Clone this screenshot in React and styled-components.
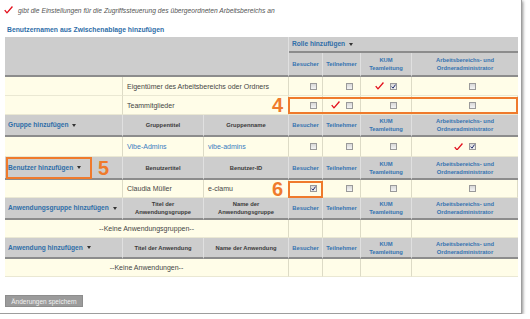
import React from "react";
import styled, { createGlobalStyle } from "styled-components";

const GlobalStyle = createGlobalStyle`
  html, body { margin: 0; padding: 0; background: #fff; }
  body { font-family: "Liberation Sans", Arial, sans-serif; }
`;

const COLS = "118px 81px 85px 34px 38px 51px 106px";
const ORANGE = "#ef7a2c";
const BLUE = "#2f6ea8";

const Frame = styled.div`
  box-sizing: border-box;
  width: 522px;
  height: 314px;
  padding: 0 0 0 5px;
  border-right: 1px solid #9d9d9d;
  border-bottom: 1px solid #9d9d9d;
  box-shadow: 1px 1px 3px rgba(0, 0, 0, 0.45);
  background: #fff;
`;

const Note = styled.div`
  display: flex;
  align-items: center;
  gap: 5px;
  height: 20px;
  margin-left: -1px;
  font-style: italic;
  font-size: 6.7px;
  color: #555;
`;

const Subtitle = styled.div`
  margin: 4px 0 1px 2px;
  height: 12px;
  line-height: 12px;
  font-weight: bold;
  font-size: 6.8px;
  color: ${BLUE};
`;

const Table = styled.div`
  width: 513px;
  display: flex;
  flex-direction: column;
`;

const HeadBlock = styled.div`
  display: grid;
  grid-template-columns: ${COLS};
  grid-template-rows: 16px 24px;
`;

const Row = styled.div`
  position: relative;
  display: grid;
  grid-template-columns: ${COLS};
  height: ${(p) => p.$h}px;
`;

const HeadCell = styled.div`
  box-sizing: border-box;
  grid-column: span ${(p) => p.$span || 1};
  grid-row: span ${(p) => p.$rows || 1};
  display: flex;
  align-items: center;
  justify-content: ${(p) => (p.$left ? "flex-start" : "center")};
  padding-left: ${(p) => (p.$left ? 3 : 0)}px;
  background: #cdcdcd;
  border-right: ${(p) => (p.$end ? "none" : "1px solid #e0e0e0")};
  border-bottom: 2px solid #8c8c8c;
  text-align: center;
  font-weight: bold;
  font-size: 5.8px;
  line-height: 8px;
  color: ${(p) => (p.$dark ? "#3a3a3a" : "#3573b0")};
  white-space: nowrap;
`;

const Label = styled.span`
  display: inline-flex;
  align-items: center;
  font-size: 6.6px;
  color: ${BLUE};
`;

const Caret = styled.span`
  display: inline-block;
  width: 0;
  height: 0;
  margin-left: 4px;
  border-left: 2.5px solid transparent;
  border-right: 2.5px solid transparent;
  border-top: 3px solid #333;
`;

const BodyCell = styled.div`
  box-sizing: border-box;
  grid-column: span ${(p) => p.$span || 1};
  display: flex;
  align-items: center;
  justify-content: ${(p) => (p.$center ? "center" : "flex-start")};
  gap: 6px;
  padding-left: ${(p) => (p.$center ? 0 : 4)}px;
  background: #fffde8;
  border-right: 1px solid #dddbc6;
  border-bottom: 1px solid #eae8d3;
  font-size: 7px;
  color: #454545;
  white-space: nowrap;
  &:last-child {
    border-right: none;
  }
`;

const Link = styled.span`
  color: #3a7cc0;
`;

const TickSlot = styled.span`
  display: flex;
  width: 9px;
  height: 8px;
  visibility: ${(p) => (p.$on ? "visible" : "hidden")};
`;

const Box = styled.span`
  box-sizing: border-box;
  display: flex;
  align-items: center;
  justify-content: center;
  width: 7px;
  height: 7px;
  border: 1px solid #9a9a9a;
  background: linear-gradient(#d8d8d8, #f4f4f4);
`;

const Callout = styled.div`
  position: absolute;
  box-sizing: border-box;
  border: 2px solid ${ORANGE};
  pointer-events: none;
`;

const Marker = styled.div`
  position: absolute;
  top: 0;
  bottom: 0;
  display: flex;
  align-items: center;
  font-weight: bold;
  font-size: 20px;
  color: ${ORANGE};
`;

const SaveButton = styled.button`
  display: block;
  margin-top: 18px;
  width: 78px;
  height: 12px;
  padding: 0;
  background: #9b9b9b;
  border: 1px solid #8d8d8d;
  color: #f2f2f2;
  font-family: inherit;
  font-size: 6.5px;
`;

function RedCheck({ size = 9 }) {
  return (
    <svg width={size} height={size * 0.85} viewBox="0 0 10 8.5">
      <path d="M0.8 4.6 L3.3 7.6 L9.4 0.6" fill="none" stroke="#e3101c" strokeWidth="1.5" strokeLinejoin="round" />
    </svg>
  );
}

function BlueCheck() {
  return (
    <svg width="5" height="5" viewBox="0 0 5 5">
      <path d="M0.6 2.6 L2 4.2 L4.5 0.6" fill="none" stroke="#23306e" strokeWidth="1" />
    </svg>
  );
}

function RoleHeads() {
  return (
    <>
      <HeadCell>Besucher</HeadCell>
      <HeadCell>Teilnehmer</HeadCell>
      <HeadCell>KUM<br />Teamleitung</HeadCell>
      <HeadCell $end>Arbeitsbereichs- und<br />Ordneradministrator</HeadCell>
    </>
  );
}

function RoleCells({ roles }) {
  return roles.map(([tick, checked], i) => (
    <BodyCell key={i} $center>
      <TickSlot $on={tick}>
        <RedCheck size={9} />
      </TickSlot>
      <Box>{checked ? <BlueCheck /> : null}</Box>
    </BodyCell>
  ));
}

function EmptyRoles() {
  return [0, 1, 2, 3].map((i) => <BodyCell key={i} />);
}

function Section({ title, col1, col2, dark = true, h = 22, children }) {
  return (
    <Row $h={h}>
      <HeadCell $left>
        <Label>{title}<Caret /></Label>
      </HeadCell>
      <HeadCell $dark={dark}>{col1}</HeadCell>
      <HeadCell $dark={dark}>{col2}</HeadCell>
      <RoleHeads />
      {children}
    </Row>
  );
}

export default function App() {
  return (
    <>
      <GlobalStyle />
      <Frame>
        <Note>
          <RedCheck size={9} />
          gibt die Einstellungen für die Zugriffssteuerung des übergeordneten Arbeitsbereichs an
        </Note>
        <Subtitle>Benutzernamen aus Zwischenablage hinzufügen</Subtitle>

        <Table>
          <HeadBlock>
            <HeadCell $span={3} $rows={2} />
            <HeadCell $span={4} $left $end>
              <Label>Rolle hinzufügen<Caret /></Label>
            </HeadCell>
            <RoleHeads />
          </HeadBlock>

          <Row $h={19}>
            <BodyCell />
            <BodyCell $span={2}>Eigentümer des Arbeitsbereichs oder Ordners</BodyCell>
            <RoleCells roles={[[0, 0], [0, 0], [1, 1], [0, 0]]} />
          </Row>
          <Row $h={19}>
            <BodyCell />
            <BodyCell $span={2}>Teammitglieder</BodyCell>
            <RoleCells roles={[[0, 0], [1, 0], [0, 0], [0, 0]]} />
            <Callout style={{ left: 283, top: 1, width: 230, height: 17 }} />
            <Marker style={{ left: 267 }}>4</Marker>
          </Row>

          <Section title="Gruppe hinzufügen" col1="Gruppentitel" col2="Gruppenname" />
          <Row $h={20}>
            <BodyCell />
            <BodyCell><Link>Vibe-Admins</Link></BodyCell>
            <BodyCell><Link>vibe-admins</Link></BodyCell>
            <RoleCells roles={[[0, 0], [0, 0], [0, 0], [1, 1]]} />
          </Row>

          <Section title="Benutzer hinzufügen" col1="Benutzertitel" col2="Benutzer-ID" h={23}>
            <Callout style={{ left: 1, top: 0, width: 86, height: 22 }} />
            <Marker style={{ left: 93 }}>5</Marker>
          </Section>
          <Row $h={18}>
            <BodyCell />
            <BodyCell>Claudia Müller</BodyCell>
            <BodyCell>e-clamu</BodyCell>
            <RoleCells roles={[[0, 1], [0, 0], [0, 0], [0, 0]]} />
            <Callout style={{ left: 283, top: 1, width: 35, height: 17 }} />
            <Marker style={{ left: 267 }}>6</Marker>
          </Row>

          <Section
            title="Anwendungsgruppe hinzufügen"
            col1={<>Titel der<br />Anwendungsgruppe</>}
            col2={<>Name der<br />Anwendungsgruppe</>}
          />
          <Row $h={18}>
            <BodyCell $span={3} $center>--Keine Anwendungsgruppen--</BodyCell>
            <EmptyRoles />
          </Row>

          <Section title="Anwendung hinzufügen" col1="Titel der Anwendung" col2="Name der Anwendung" h={21} />
          <Row $h={18}>
            <BodyCell $span={3} $center>--Keine Anwendungen--</BodyCell>
            <EmptyRoles />
          </Row>
        </Table>

        <SaveButton>Änderungen speichern</SaveButton>
      </Frame>
    </>
  );
}
